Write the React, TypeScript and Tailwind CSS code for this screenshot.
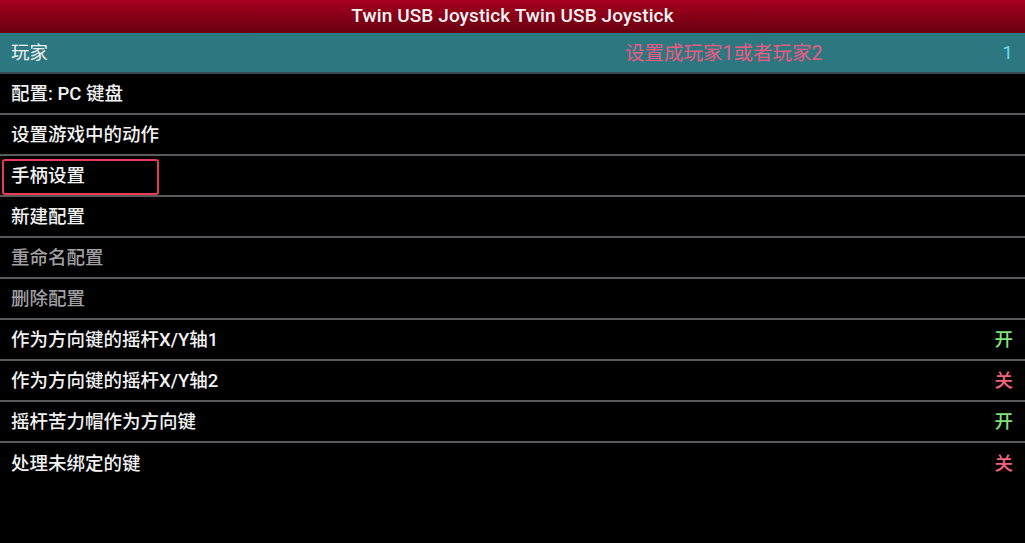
import React from "react";

type Row = {
  label: string;
  dim?: boolean;
  value?: { text: string; color: string };
  boxed?: boolean;
};

const rows: Row[] = [
  { label: "配置: PC 键盘" },
  { label: "设置游戏中的动作" },
  { label: "手柄设置", boxed: true },
  { label: "新建配置" },
  { label: "重命名配置", dim: true },
  { label: "删除配置", dim: true },
  { label: "作为方向键的摇杆X/Y轴1", value: { text: "开", color: "text-[#7fe37a]" } },
  { label: "作为方向键的摇杆X/Y轴2", value: { text: "关", color: "text-[#f0647e]" } },
  { label: "摇杆苦力帽作为方向键", value: { text: "开", color: "text-[#7fe37a]" } },
  { label: "处理未绑定的键", value: { text: "关", color: "text-[#f0647e]" } },
];

export default function App() {
  return (
    <div
      className="w-[1025px] h-[543px] bg-black overflow-hidden flex flex-col"
      style={{ fontFamily: '"Roboto", "Noto Sans CJK SC", sans-serif' }}
    >
      <div className="h-[33px] shrink-0 flex items-center justify-center bg-gradient-to-b from-[#a6001d] to-[#680012]">
        <span className="text-[#f4f4f4] text-[19px] font-medium tracking-[0.1px]">
          Twin USB Joystick Twin USB Joystick
        </span>
      </div>

      <div className="h-[41px] shrink-0 flex items-center bg-[#2d7880] border-b-2 border-[#3a4a50] pl-[11px] pr-[12px] pt-[2px]">
        <span className="text-[#eef2f2] text-[18.5px] w-[614px]">玩家</span>
        <span className="text-[#ec5a82] text-[19.5px]">设置成玩家1或者玩家2</span>
        <span className="ml-auto text-[#6ee0ee] text-[18.5px]">1</span>
      </div>

      {rows.map((r, i) => (
        <div
          key={i}
          className={`h-[41px] shrink-0 flex items-center pl-[11px] pr-[12px] pt-[2px] ${
            i < rows.length - 1 ? "border-b-2 border-[#5a5a5e]" : ""
          }`}
        >
          {r.boxed ? (
            <div className="-ml-[9px] h-[36px] w-[157px] flex items-center pl-[7px] border-2 border-[#e83a52] rounded-[3px]">
              <span className="text-[#f2f2f2] text-[18.5px] font-medium">{r.label}</span>
            </div>
          ) : (
            <span
              className={`text-[18.5px] font-medium ${
                r.dim ? "text-[#a0a0a4]" : "text-[#f2f2f2]"
              }`}
            >
              {r.label}
            </span>
          )}
          {r.value && (
            <span className={`ml-auto text-[18.5px] font-medium ${r.value.color}`}>
              {r.value.text}
            </span>
          )}
        </div>
      ))}
    </div>
  );
}
